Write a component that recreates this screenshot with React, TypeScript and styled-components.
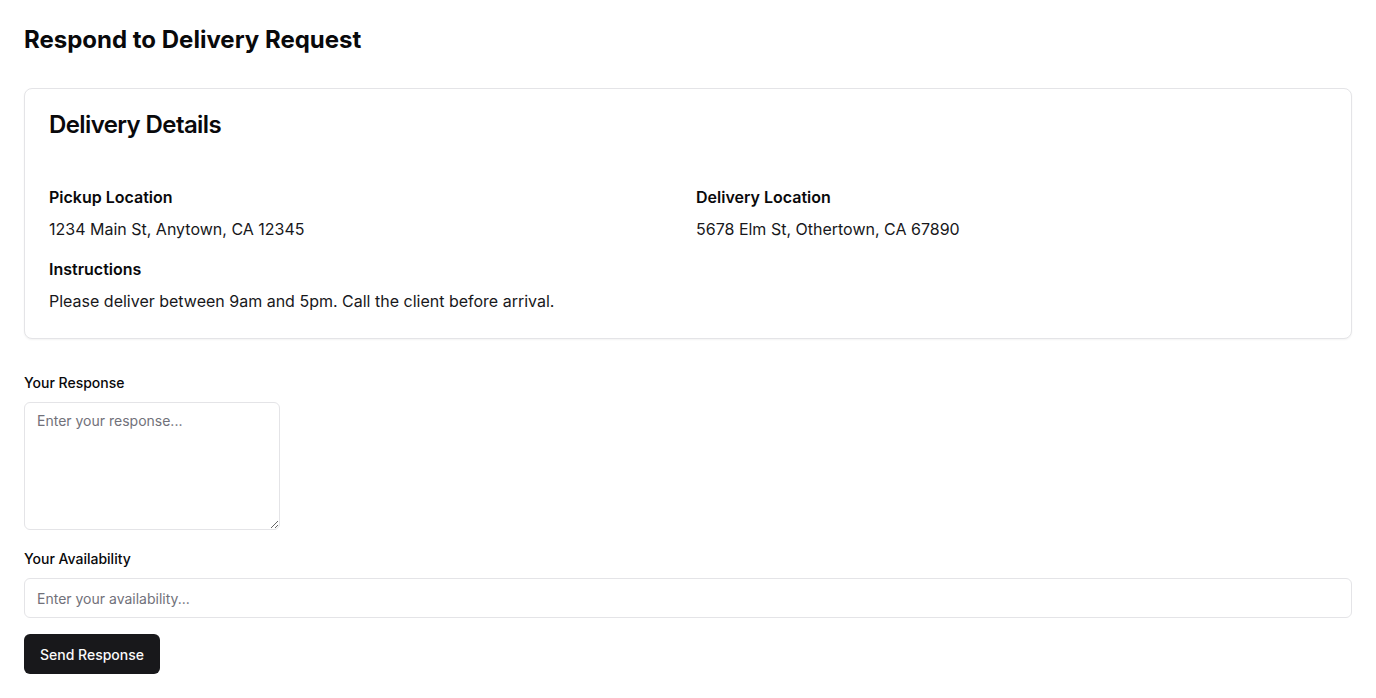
import React from "react";
import styled, { createGlobalStyle } from "styled-components";

const GlobalStyle = createGlobalStyle`
  * { box-sizing: border-box; }
  body {
    margin: 0;
    background: #ffffff;
    font-family: Inter, "Noto Sans", sans-serif;
    color: #09090b;
  }
`;

const Page = styled.div`
  padding: 24px;
`;

const PageTitle = styled.h1`
  margin: 0 0 32px;
  font-size: 24px;
  line-height: 32px;
  font-weight: 700;
  letter-spacing: 0;
`;

const Card = styled.section`
  border: 1px solid #e4e4e7;
  border-radius: 8px;
  background: #fff;
  box-shadow: 0 1px 2px rgba(0, 0, 0, 0.05);
  padding: 24px 24px 25px;
`;

const CardTitle = styled.h2`
  margin: 0 0 48px;
  font-size: 24px;
  line-height: 24px;
  font-weight: 600;
  letter-spacing: -0.6px;
`;

const DetailGrid = styled.div`
  display: grid;
  grid-template-columns: 1fr 1fr;
  column-gap: 16px;
  row-gap: 16px;
`;

const Detail = styled.div<{ $full?: boolean }>`
  grid-column: ${(p) => (p.$full ? "1 / -1" : "auto")};
  display: flex;
  flex-direction: column;
  gap: 8px;
`;

const DetailLabel = styled.h3`
  margin: 0;
  font-size: 16px;
  line-height: 24px;
  font-weight: 600;
`;

const DetailValue = styled.p`
  margin: 0;
  font-size: 16px;
  line-height: 24px;
  color: #18181b;
`;

const Form = styled.form`
  margin-top: 34px;
  display: flex;
  flex-direction: column;
  gap: 16px;
`;

const Field = styled.div`
  display: flex;
  flex-direction: column;
  align-items: flex-start;
  gap: 9px;
`;

const FieldLabel = styled.label`
  font-size: 14px;
  line-height: 20px;
  font-weight: 500;
`;

const TextArea = styled.textarea`
  width: 256px;
  height: 128px;
  padding: 8px 12px;
  border: 1px solid #e4e4e7;
  border-radius: 6px;
  font-family: Inter, "Noto Sans", sans-serif;
  font-size: 14px;
  line-height: 20px;
  color: #09090b;
  background: #fff;
  outline: none;
  margin-bottom: 3px;
  &::placeholder { color: #71717a; }
`;

const TextInput = styled.input`
  width: 100%;
  height: 40px;
  padding: 8px 12px;
  border: 1px solid #e4e4e7;
  border-radius: 6px;
  font-family: Inter, "Noto Sans", sans-serif;
  font-size: 14px;
  color: #09090b;
  background: #fff;
  outline: none;
  &::placeholder { color: #71717a; }
`;

const SubmitButton = styled.button`
  align-self: flex-start;
  height: 40px;
  padding: 0 16px;
  border: none;
  border-radius: 6px;
  background: #18181b;
  color: #fafafa;
  font-family: Inter, "Noto Sans", sans-serif;
  font-size: 14px;
  font-weight: 500;
  cursor: pointer;
`;

export default function App() {
  return (
    <>
      <GlobalStyle />
      <Page>
        <PageTitle>Respond to Delivery Request</PageTitle>
        <Card>
          <CardTitle>Delivery Details</CardTitle>
          <DetailGrid>
            <Detail>
              <DetailLabel>Pickup Location</DetailLabel>
              <DetailValue>1234 Main St, Anytown, CA 12345</DetailValue>
            </Detail>
            <Detail>
              <DetailLabel>Delivery Location</DetailLabel>
              <DetailValue>5678 Elm St, Othertown, CA 67890</DetailValue>
            </Detail>
            <Detail $full>
              <DetailLabel>Instructions</DetailLabel>
              <DetailValue>Please deliver between 9am and 5pm. Call the client before arrival.</DetailValue>
            </Detail>
          </DetailGrid>
        </Card>
        <Form onSubmit={(e) => e.preventDefault()}>
          <Field>
            <FieldLabel htmlFor="response">Your Response</FieldLabel>
            <TextArea id="response" placeholder="Enter your response..." />
          </Field>
          <Field>
            <FieldLabel htmlFor="availability">Your Availability</FieldLabel>
            <TextInput id="availability" placeholder="Enter your availability..." />
          </Field>
          <SubmitButton type="submit">Send Response</SubmitButton>
        </Form>
      </Page>
    </>
  );
}
